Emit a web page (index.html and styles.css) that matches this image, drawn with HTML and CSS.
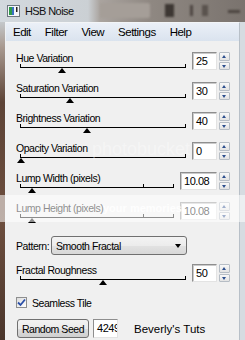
FILE: index.html
```html
<!DOCTYPE html>
<html lang="en">
<head>
  <meta charset="UTF-8">
  <title>HSB Noise</title>
  <link rel="stylesheet" href="styles.css">
</head>
<body>
  <div class="screen">
    <div class="titlebar">
      <svg class="app-icon" width="13" height="12" viewBox="0 0 13 12">
        <rect x="0.5" y="0.5" width="12" height="11" fill="#f4f6f8" stroke="#6d7780"/>
        <rect x="2" y="2" width="3" height="8" fill="#2e9a48"/>
        <rect x="5" y="2" width="2" height="8" fill="#3a6fc4"/>
        <rect x="9" y="2" width="1.5" height="5" fill="#222"/>
      </svg>
      <span class="title">HSB Noise</span>
      <span class="blob blob-box"></span>
      <span class="blob blob-dark"></span>
      <span class="blob blob-i"></span>
      <span class="blob blob-u"></span>
      <span class="blob blob-dash"></span>
    </div>

    <div class="frame">
      <div class="edge-left"></div>
      <div class="window">
        <div class="menubar">
          <span>Edit</span>
          <span>Filter</span>
          <span>View</span>
          <span>Settings</span>
          <span>Help</span>
        </div>

        <div class="client">
          <div class="row">
            <div class="slide">
              <div class="lbl">Hue Variation</div>
              <div class="track"><span class="thumb" style="left: 37px"></span></div>
            </div>
            <div class="num">25</div>
            <div class="spin"><span class="up"></span><span class="down"></span></div>
          </div>

          <div class="row">
            <div class="slide">
              <div class="lbl">Saturation Variation</div>
              <div class="track"><span class="thumb" style="left: 45px"></span></div>
            </div>
            <div class="num">30</div>
            <div class="spin"><span class="up"></span><span class="down"></span></div>
          </div>

          <div class="row">
            <div class="slide">
              <div class="lbl">Brightness Variation</div>
              <div class="track"><span class="thumb" style="left: 62px"></span></div>
            </div>
            <div class="num">40</div>
            <div class="spin"><span class="up"></span><span class="down"></span></div>
          </div>

          <div class="row">
            <div class="slide">
              <div class="lbl">Opacity Variation</div>
              <div class="track"><span class="thumb" style="left: -4px"></span></div>
            </div>
            <div class="num">0</div>
            <div class="spin"><span class="up"></span><span class="down"></span></div>
          </div>

          <div class="row">
            <div class="slide">
              <div class="lbl">Lump Width (pixels)</div>
              <div class="track"><span class="tick"></span><span class="thumb" style="left: 7px"></span></div>
            </div>
            <div class="num wide">10.08</div>
            <div class="spin"><span class="up"></span><span class="down"></span></div>
          </div>

          <div class="row">
            <div class="slide">
              <div class="lbl">Lump Height (pixels)</div>
              <div class="track"><span class="tick"></span><span class="thumb" style="left: 7px"></span></div>
            </div>
            <div class="num wide">10.08</div>
            <div class="spin"><span class="up"></span><span class="down"></span></div>
          </div>

          <div class="pattern-row">
            <span class="pattern-lbl">Pattern:</span>
            <div class="select">
              <span>Smooth Fractal</span>
              <span class="caret"></span>
            </div>
          </div>

          <div class="row rough">
            <div class="slide">
              <div class="lbl">Fractal Roughness</div>
              <div class="track"><span class="thumb" style="left: 78px"></span></div>
            </div>
            <div class="num">50</div>
            <div class="spin"><span class="up"></span><span class="down"></span></div>
          </div>

          <div class="check-row">
            <span class="checkbox">
              <svg width="9" height="9" viewBox="0 0 9 9">
                <path d="M1 4.5 L3.5 7 L8 1.5" fill="none" stroke="#2a4fa8" stroke-width="1.8"/>
              </svg>
            </span>
            <span>Seamless Tile</span>
          </div>

          <div class="seed-row">
            <button class="btn">Random Seed</button>
            <div class="seed">4249</div>
            <span class="credit">Beverly's Tuts</span>
          </div>
        </div>
      </div>
      <div class="edge-right"></div>
    </div>

    <div class="wm-logo">photobucket</div>
    <div class="band"><span>your memories</span></div>
  </div>
</body>
</html>
```

FILE: styles.css
```css
* {
  box-sizing: border-box;
}

body {
  margin: 0;
  font-family: "Liberation Sans", Arial, sans-serif;
  color: #000;
}

.screen {
  position: relative;
  width: 245px;
  height: 340px;
  overflow: hidden;
  display: flex;
  flex-direction: column;
  background: #f0f0f0;
}

/* title bar (glass, with the app behind it showing through) */
.titlebar {
  position: relative;
  height: 22px;
  flex: none;
  display: flex;
  align-items: center;
  padding-left: 7px;
  background: linear-gradient(90deg, #d3d9de 0, #cbd0d4 88px, #aaa49f 100px, #8f8882 150px, #7a736e 100%);
}

.app-icon {
  flex: none;
}

.title {
  margin-left: 5px;
  font-size: 11px;
  letter-spacing: -0.6px;
  color: #111;
}

.blob {
  position: absolute;
  filter: blur(1.2px);
}

.blob-box {
  left: 100px;
  top: 3px;
  width: 50px;
  height: 15px;
  background: #a59e98;
  border-radius: 2px;
}

.blob-dark {
  left: 165px;
  top: 4px;
  width: 9px;
  height: 13px;
  background: #3d3733;
}

.blob-i {
  left: 190px;
  top: 5px;
  width: 3px;
  height: 11px;
  background: #4e4743;
}

.blob-u {
  left: 202px;
  top: 5px;
  width: 6px;
  height: 11px;
  background: #5a534e;
}

.blob-dash {
  left: 228px;
  top: 10px;
  width: 12px;
  height: 3px;
  background: #4c4540;
}

.frame {
  flex: 1;
  display: flex;
}

.edge-left {
  width: 5px;
  background: linear-gradient(180deg, #c4c8cb 0, #a8998f 25px, #5d4437 80px, #6d4e3e 200px, #4a362c 100%);
}

.edge-right {
  width: 5px;
  background: #d6dce1;
}

.window {
  flex: 1;
  display: flex;
  flex-direction: column;
  border-left: 1px solid #eef1f4;
  border-top: 1px solid #f3f5f7;
  border-right: 1px solid #b8c0c8;
}

/* menu */
.menubar {
  height: 18px;
  flex: none;
  display: flex;
  align-items: center;
  background: linear-gradient(#ebf0f7, #dae3ee);
  font-size: 11.5px;
  letter-spacing: -0.5px;
}

.menubar span {
  padding: 0 7px;
}

.client {
  flex: 1;
  padding: 11px 9px 0 10px;
  background: #f0f0f0;
  font-size: 10.5px;
  letter-spacing: -0.45px;
}

/* slider rows */
.row {
  display: flex;
  height: 30px;
}

.slide {
  flex: 1;
  margin-right: 6px;
}

.lbl {
  height: 13px;
  line-height: 13px;
  white-space: nowrap;
}

.track {
  position: relative;
  height: 4px;
  margin: -1px 0 0 4px;
  border: 1px solid #000;
  border-top: 0;
}

.thumb {
  position: absolute;
  top: 4px;
  width: 0;
  height: 0;
  border-left: 4px solid transparent;
  border-right: 4px solid transparent;
  border-bottom: 5px solid #000;
}

.tick {
  position: absolute;
  left: 122px;
  bottom: 0;
  width: 1px;
  height: 3px;
  background: #000;
}

.num {
  width: 25px;
  height: 18px;
  padding-left: 3px;
  background: #fff;
  border: 1px solid;
  border-color: #8e8e8e #e3e3e3 #e3e3e3 #8e8e8e;
  box-shadow: inset 1px 1px 0 #cacaca;
  font-size: 11px;
  line-height: 16px;
}

.num.wide {
  width: 37px;
}

.spin {
  width: 11px;
  height: 18px;
  margin-left: 2px;
  display: flex;
  flex-direction: column;
  gap: 1px;
}

.spin span {
  position: relative;
  flex: 1;
  border: 1px solid #b6bdc5;
  border-radius: 1px;
  background: linear-gradient(#f8f8f8, #e3e3e3);
}

.spin span::after {
  content: "";
  position: absolute;
  left: 2px;
  top: 2px;
  border-left: 2.5px solid transparent;
  border-right: 2.5px solid transparent;
}

.spin .up::after {
  border-bottom: 3px solid #2d4f8e;
}

.spin .down::after {
  border-top: 3px solid #2d4f8e;
}

/* pattern dropdown */
.pattern-row {
  display: flex;
  align-items: center;
  height: 19px;
  margin-top: 4px;
}

.pattern-lbl {
  width: 35px;
}

.select {
  width: 136px;
  height: 19px;
  display: flex;
  align-items: center;
  justify-content: space-between;
  padding: 0 5px 0 4px;
  border: 1px solid #707070;
  border-radius: 3px;
  background: linear-gradient(#f3f3f3 0, #ececec 50%, #e2e2e2 51%, #d8d8d8 100%);
}

.caret {
  border-left: 3.5px solid transparent;
  border-right: 3.5px solid transparent;
  border-top: 4px solid #000;
}

.row.rough {
  margin-top: 9px;
}

/* checkbox */
.check-row {
  display: flex;
  align-items: center;
  gap: 5px;
  height: 11px;
  margin-top: 3px;
}

.checkbox {
  width: 11px;
  height: 11px;
  display: flex;
  align-items: center;
  justify-content: center;
  background: linear-gradient(135deg, #dcdcdc, #fff);
  border: 1px solid #8e8f8f;
}

/* seed */
.seed-row {
  display: flex;
  align-items: center;
  margin-top: 11px;
  height: 19px;
}

.btn {
  margin: 0 0 0 1px;
  width: 72px;
  height: 19px;
  padding: 0;
  border: 1px solid #707070;
  border-radius: 3px;
  background: linear-gradient(#f2f2f2 0, #ebebeb 50%, #dddddd 51%, #cfcfcf 100%);
  font-family: inherit;
  font-size: 10.5px;
  letter-spacing: -0.45px;
  color: #000;
}

.seed {
  width: 25px;
  height: 19px;
  margin-left: 4px;
  padding-left: 3px;
  overflow: hidden;
  white-space: nowrap;
  background: #fff;
  border: 1px solid;
  border-color: #8e8e8e #e3e3e3 #e3e3e3 #8e8e8e;
  font-size: 11px;
  line-height: 17px;
}

.credit {
  margin-left: 16px;
  font-size: 11.5px;
  letter-spacing: 0;
}

/* photobucket watermark over the dialog */
.wm-logo {
  position: absolute;
  left: 92px;
  top: 139px;
  font-size: 18px;
  color: rgba(255, 255, 255, 0.35);
}

.band {
  position: absolute;
  left: 0;
  right: 0;
  top: 195px;
  height: 27px;
  background: rgba(255, 255, 255, 0.55);
}

.band span {
  position: absolute;
  left: 103px;
  top: 7px;
  font-weight: bold;
  font-size: 11px;
  color: rgba(255, 255, 255, 0.9);
}
```
